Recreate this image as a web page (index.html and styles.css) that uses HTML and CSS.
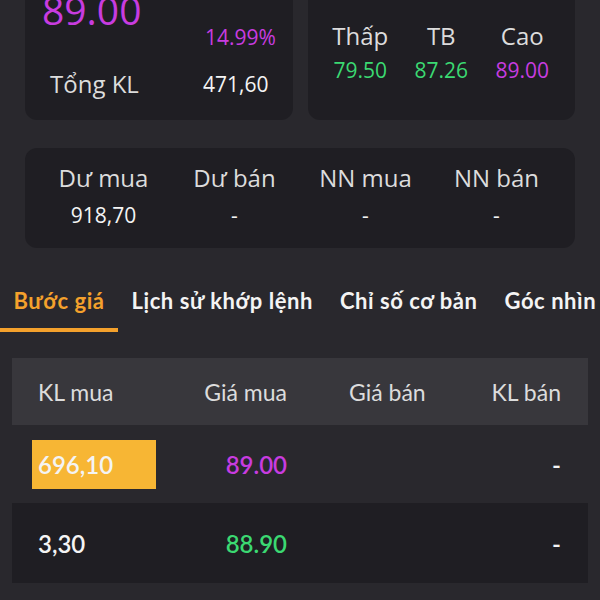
FILE: index.html
```html
<!DOCTYPE html>
<html lang="vi">

<head>
  <meta charset="UTF-8" />
  <meta name="viewport" content="width=device-width, initial-scale=1.0" />
  <title>Bước giá</title>
  <link rel="stylesheet" href="styles.css">
</head>

<body>

  <!-- Price summary -->
  <div class="top-row">
    <div class="card price-card">
      <div class="price up-ceil">89.00</div>
      <div class="pct up-ceil">14.99%</div>
      <div class="label">Tổng KL</div>
      <div class="num">471,60</div>
    </div>

    <div class="card range-card">
      <div class="label">Thấp</div>
      <div class="label">TB</div>
      <div class="label">Cao</div>
      <div class="num up">79.50</div>
      <div class="num up">87.26</div>
      <div class="num up-ceil">89.00</div>
    </div>
  </div>

  <!-- Surplus / foreign -->
  <div class="card surplus-card">
    <div class="label">Dư mua</div>
    <div class="label">Dư bán</div>
    <div class="label">NN mua</div>
    <div class="label">NN bán</div>
    <div class="num">918,70</div>
    <div class="num">-</div>
    <div class="num">-</div>
    <div class="num">-</div>
  </div>

  <!-- Tabs -->
  <div class="tabs">
    <div class="tab active">Bước giá</div>
    <div class="tab">Lịch sử khớp lệnh</div>
    <div class="tab">Chỉ số cơ bản</div>
    <div class="tab">Góc nhìn kỹ thuật</div>
  </div>

  <!-- Order book -->
  <div class="book">
    <div class="book-row book-head">
      <div class="c1">KL mua</div>
      <div class="c2">Giá mua</div>
      <div class="c3">Giá bán</div>
      <div class="c4">KL bán</div>
    </div>

    <div class="book-row">
      <div class="c1 has-bar">
        <div class="vol-bar" style="width:124px;">696,10</div>
      </div>
      <div class="c2 up-ceil">89.00</div>
      <div class="c3"></div>
      <div class="c4">-</div>
    </div>

    <div class="book-row alt">
      <div class="c1">3,30</div>
      <div class="c2 up">88.90</div>
      <div class="c3"></div>
      <div class="c4">-</div>
    </div>
  </div>

</body>

</html>
```

FILE: styles.css
```css
:root {
  --page-bg: #29282d;
  --card-bg: #1f1e23;
  --head-bg: #38373c;
  --white: #f4f4f4;
  --label: #dcdcdc;
  --ceil: #c83ce0;
  --green: #3bd972;
  --orange: #f4a12c;
  --yellow: #f7b634;
}

* {
  box-sizing: border-box;
}

html,
body {
  margin: 0;
  padding: 0;
  background-color: var(--page-bg);
  color: var(--white);
  font-family: 'Open Sans', 'Noto Sans', sans-serif;
  overflow: hidden;
}

.card {
  background: var(--card-bg);
  border-radius: 12px;
}

.up {
  color: var(--green);
}

.up-ceil {
  color: var(--ceil);
}

.label {
  color: var(--label);
  font-size: 24px;
  line-height: 30px;
}

.num {
  font-size: 21px;
  line-height: 26px;
}

/* top cards */
.top-row {
  display: grid;
  grid-template-columns: 1fr 1fr;
  gap: 15px;
  padding: 0 25px;
  margin-top: -30px;
}

.price-card {
  display: grid;
  grid-template-columns: 161px auto;
  align-items: center;
  padding: 20px 0 21px 17px;
}

.price {
  font-size: 39px;
  line-height: 40px;
  padding-bottom: 20px;
}

.pct {
  align-self: end;
  font-size: 21px;
  line-height: 26px;
  padding-left: 2px;
}

.price-card .label {
  padding-left: 8px;
  margin-top: 19px;
}

.price-card .num {
  margin-top: 19px;
}

.range-card {
  display: grid;
  grid-template-columns: repeat(3, 81px);
  justify-content: center;
  align-content: start;
  text-align: center;
  padding-top: 51px;
}

.range-card .num {
  margin-top: 6px;
}

/* surplus card */
.surplus-card {
  display: grid;
  grid-template-columns: repeat(4, 1fr);
  text-align: center;
  margin: 28px 25px 0;
  padding: 15px 13px 20px;
}

.surplus-card .num {
  margin-top: 9px;
}

/* tabs */
.tabs {
  display: flex;
  white-space: nowrap;
  overflow: hidden;
  margin-top: 33px;
}

.tab {
  font-family: 'Lato', sans-serif;
  font-weight: 700;
  font-size: 22px;
  line-height: 28px;
  letter-spacing: 0.55px;
  padding: 6px 13.5px 13px;
  border-bottom: 4px solid transparent;
}

.tab.active {
  color: var(--orange);
  border-bottom-color: var(--orange);
}

/* order book */
.book {
  margin: 26px 12px 0;
  font-family: 'Lato', sans-serif;
}

.book-row {
  display: grid;
  grid-template-columns: repeat(4, 1fr);
  align-items: center;
  height: 78px;
  font-size: 24px;
  font-weight: 600;
}

.book-row.alt {
  background: var(--card-bg);
  height: 80px;
}

.book-head {
  background: var(--head-bg);
  height: 67px;
  color: var(--label);
  font-size: 23px;
  font-weight: 400;
}

.c1 {
  padding-left: 26px;
}

.c1.has-bar {
  padding-left: 20px;
}

.c2 {
  text-align: right;
  padding-right: 13px;
}

.c3 {
  padding-left: 49px;
}

.c4 {
  text-align: right;
  padding-right: 27px;
}

.vol-bar {
  background: var(--yellow);
  height: 49px;
  line-height: 49px;
  padding-left: 6px;
}
```
